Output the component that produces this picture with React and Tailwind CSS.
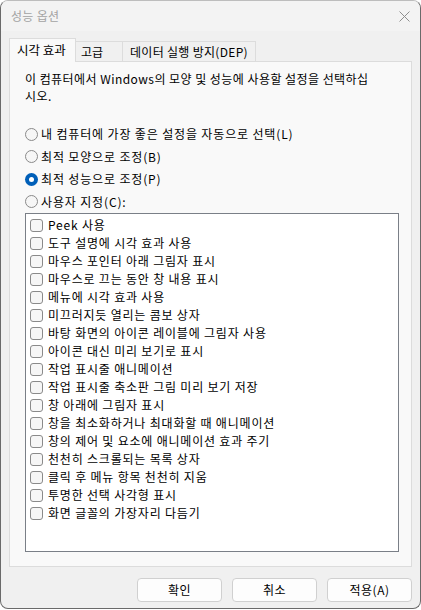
import React from "react";

const items = [
  "Peek 사용",
  "도구 설명에 시각 효과 사용",
  "마우스 포인터 아래 그림자 표시",
  "마우스로 끄는 동안 창 내용 표시",
  "메뉴에 시각 효과 사용",
  "미끄러지듯 열리는 콤보 상자",
  "바탕 화면의 아이콘 레이블에 그림자 사용",
  "아이콘 대신 미리 보기로 표시",
  "작업 표시줄 애니메이션",
  "작업 표시줄 축소판 그림 미리 보기 저장",
  "창 아래에 그림자 표시",
  "창을 최소화하거나 최대화할 때 애니메이션",
  "창의 제어 및 요소에 애니메이션 효과 주기",
  "천천히 스크롤되는 목록 상자",
  "클릭 후 메뉴 항목 천천히 지움",
  "투명한 선택 사각형 표시",
  "화면 글꼴의 가장자리 다듬기",
];

const radios = [
  ["내 컴퓨터에 가장 좋은 설정을 자동으로 선택(L)", false],
  ["최적 모양으로 조정(B)", false],
  ["최적 성능으로 조정(P)", true],
  ["사용자 지정(C):", false],
];

function Radio({ checked }) {
  return checked ? (
    <span className="w-[13px] h-[13px] rounded-full bg-[#005fb8] flex items-center justify-center shrink-0">
      <span className="w-[5px] h-[5px] rounded-full bg-white" />
    </span>
  ) : (
    <span className="w-[13px] h-[13px] rounded-full border border-[#8a8a8a] bg-[#f6f6f6] shrink-0" />
  );
}

export default function App() {
  return (
    <div
      className="w-[421px] h-[610px] bg-white text-[12px] text-[#000]"
      style={{ fontFamily: '"Noto Sans CJK KR", "Noto Sans", sans-serif' }}
    >
      <div className="w-[421px] h-[609px] rounded-[8px] border border-[#6a6a6a] border-t-[#bdbdbd] bg-[#f0f0f0] flex flex-col overflow-hidden">
        {/* Title bar */}
        <div className="h-[30px] bg-[#f3f3f3] flex items-center justify-between pl-[10px] pr-[10px] shrink-0">
          <span className="text-[#a3a3a3] text-[12px] leading-none tracking-[0.3px]">성능 옵션</span>
          <svg width="11" height="11" viewBox="0 0 11 11" className="mt-[1px]">
            <path d="M0.5 0.5 L10.5 10.5 M10.5 0.5 L0.5 10.5" stroke="#8e8e8e" strokeWidth="1" />
          </svg>
        </div>

        {/* Body */}
        <div className="flex flex-col px-[8px] pt-[7px] grow">
          {/* Tabs */}
          <div className="flex items-end h-[23px] relative z-10">
            <div className="h-[24px] -mb-[1px] w-[67px] bg-[#f9f9f9] border border-b-0 border-[#dcdcdc] flex items-center pl-[7px] leading-none text-[12.5px]">
              시각 효과
            </div>
            <div className="h-[20px] w-[47px] bg-[#f0f0f0] border border-l-0 border-b-0 border-[#dcdcdc] flex items-center pl-[5px] leading-none">
              고급
            </div>
            <div className="h-[20px] w-[133px] bg-[#f0f0f0] border border-l-0 border-b-0 border-[#dcdcdc] flex items-center pl-[7px] leading-none tracking-[0.3px]">
              데이터 실행 방지(DEP)
            </div>
          </div>

          {/* Panel */}
          <div className="w-[403px] h-[506px] border border-[#dcdcdc] bg-[#f9f9f9] pl-[15px] pr-[12px] pt-[8px] flex flex-col">
            <p className="leading-[17px] pr-[4px] tracking-[0.45px]">
              이 컴퓨터에서 Windows의 모양 및 성능에 사용할 설정을 선택하십
              <br />
              시오.
            </p>

            <div className="flex flex-col mt-[19px]">
              {radios.map(([label, checked]) => (
                <div key={label} className="h-[22.5px] flex items-center gap-[3px]">
                  <Radio checked={checked} />
                  <span className="leading-none tracking-[0.85px]">{label}</span>
                </div>
              ))}
            </div>

            <div className="mt-[0px] w-[374px] h-[339px] border border-[#7a7f87] bg-white pt-[2px] pl-[4px] flex flex-col">
              {items.map((t) => (
                <div key={t} className="h-[18px] flex items-center gap-[5px] shrink-0">
                  <span className="w-[13px] h-[13px] rounded-[3px] border border-[#8a8a8a] bg-[#f6f6f6] shrink-0" />
                  <span className="leading-none tracking-[0.8px]">{t}</span>
                </div>
              ))}
            </div>
          </div>

          {/* Buttons */}
          <div className="flex justify-end gap-[10px] mt-[11px] pr-[0px]">
            {["확인", "취소", "적용(A)"].map((b) => (
              <button
                key={b}
                className="w-[85px] h-[24px] rounded-[4px] border border-[#d0d0d0] bg-[#fdfdfd] flex items-center justify-center leading-none tracking-[0.5px]"
              >
                {b}
              </button>
            ))}
          </div>
        </div>
      </div>
    </div>
  );
}
